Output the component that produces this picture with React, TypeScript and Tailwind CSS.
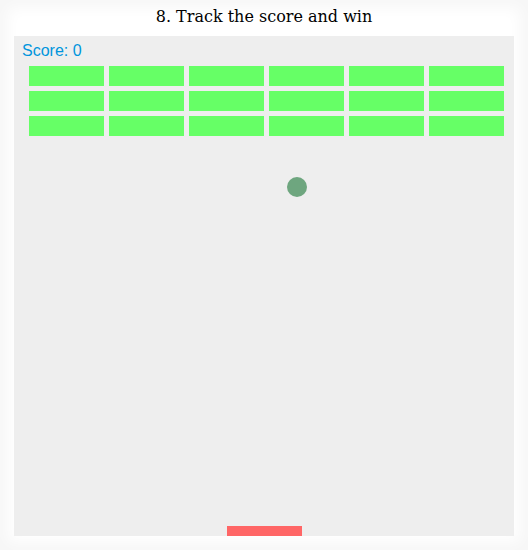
import React from "react";

const cols = [0, 1, 2, 3, 4, 5];
const rows = [0, 1, 2];

export default function App() {
  return (
    <div className="w-[528px] h-[550px] bg-white shadow-[inset_0_0_14px_8px_rgba(0,0,0,0.035)] flex flex-col items-center">
      <div className="h-[36px] w-full pt-[7px] text-center text-[16px] leading-[19px] text-black font-['DejaVu_Serif',serif]">
        8. Track the score and win
      </div>
      <div className="relative w-[500px] h-[500px] bg-[#eeeeee]">
        <div className="absolute left-[8px] top-[5.5px] text-[16px] leading-[18px] text-[#0095DD] font-['Liberation_Sans',Arial,sans-serif]">
          Score: 0
        </div>
        <div className="absolute left-[15px] top-[30px] flex flex-col gap-[5px]">
          {rows.map((r) => (
            <div key={r} className="flex gap-[5px]">
              {cols.map((c) => (
                <div key={c} className="w-[75px] h-[20px] bg-[#66ff66]" />
              ))}
            </div>
          ))}
        </div>
        <div className="absolute left-[272.7px] top-[140.7px] w-[20px] h-[20px] rounded-full bg-[#6ea67f]" />
        <div className="absolute left-[212.5px] top-[490px] w-[75px] h-[10px] bg-[#ff6666]" />
      </div>
    </div>
  );
}
